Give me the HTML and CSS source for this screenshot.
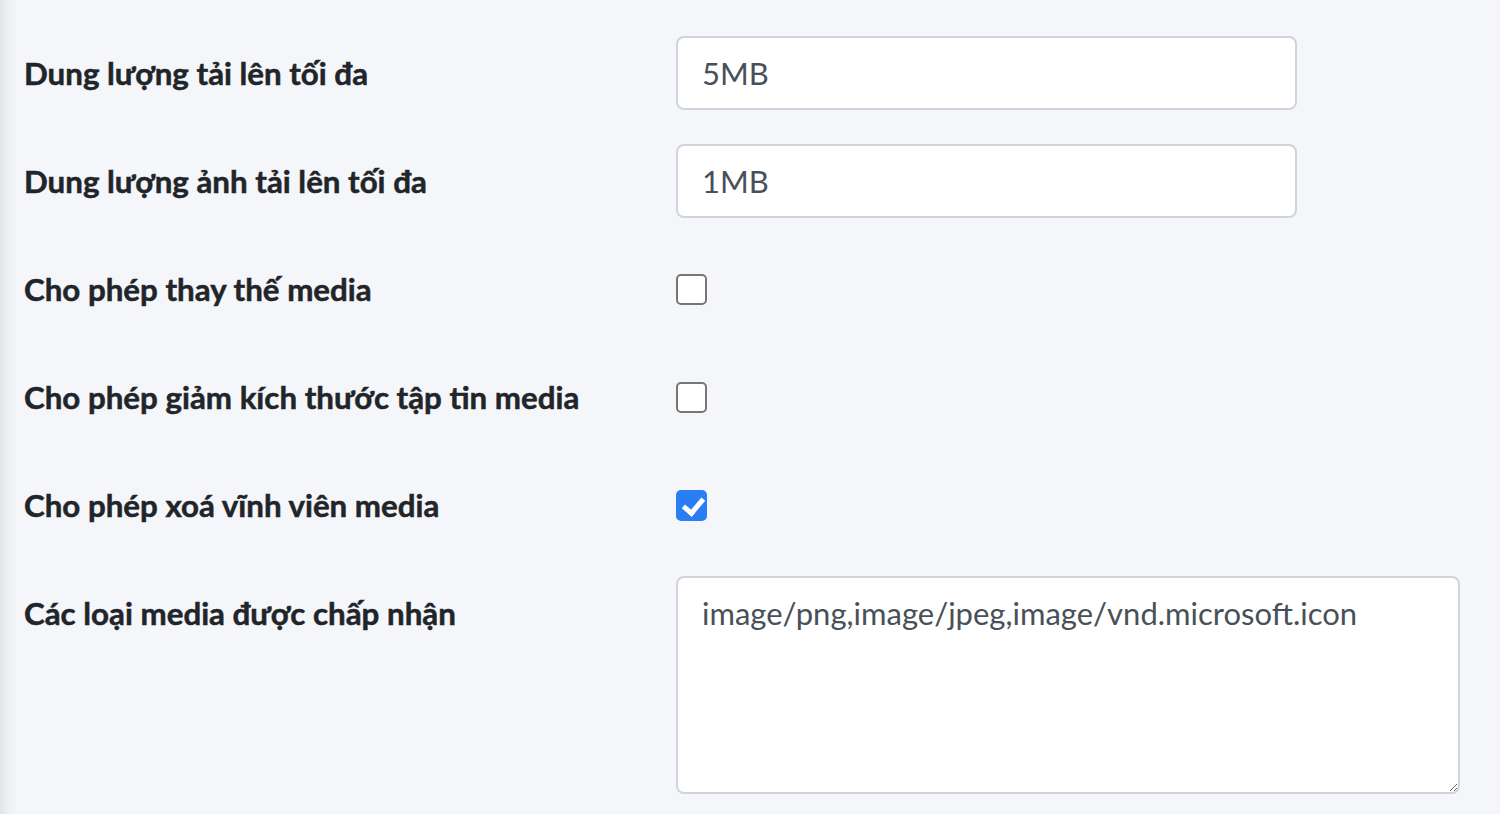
FILE: index.html
```html
<!DOCTYPE html>
<html lang="vi">
<head>
    <meta charset="UTF-8">
    <meta name="viewport" content="width=device-width, initial-scale=1.0">
    <title>Cài đặt media</title>
    <link rel="stylesheet" href="styles.css">
</head>
<body>
    <div class="content">
        <form class="settings">
            <div class="row">
                <label class="label" for="maxUpload">Dung lượng tải lên tối đa</label>
                <input class="field" id="maxUpload" type="text" value="5MB">
            </div>
            <div class="row">
                <label class="label" for="maxImage">Dung lượng ảnh tải lên tối đa</label>
                <input class="field" id="maxImage" type="text" value="1MB">
            </div>
            <div class="row">
                <label class="label" for="replace">Cho phép thay thế media</label>
                <div class="check-wrap"><input class="check" id="replace" type="checkbox"></div>
            </div>
            <div class="row">
                <label class="label" for="resize">Cho phép giảm kích thước tập tin media</label>
                <div class="check-wrap"><input class="check" id="resize" type="checkbox"></div>
            </div>
            <div class="row">
                <label class="label" for="forceDelete">Cho phép xoá vĩnh viên media</label>
                <div class="check-wrap"><input class="check" id="forceDelete" type="checkbox" checked></div>
            </div>
            <div class="row">
                <label class="label" for="mimes">Các loại media được chấp nhận</label>
                <textarea class="field area" id="mimes">image/png,image/jpeg,image/vnd.microsoft.icon</textarea>
            </div>
        </form>
    </div>
</body>
</html>
```

FILE: styles.css
```css
* {
    box-sizing: border-box;
}
body {
    margin: 0;
    background-color: #f4f6f9;
    font-family: "Lato", "Open Sans", sans-serif;
    color: #212529;
}
.content {
    min-height: 814px;
    padding: 36px 0 0 24px;
    background: linear-gradient(to right, #e2e4e7 0, #eef0f3 8px, #f4f6f9 18px);
}
.settings {
    display: flex;
    flex-direction: column;
    gap: 34px;
}
.row {
    display: grid;
    grid-template-columns: 652px 1fr;
    align-items: start;
}
.label {
    font-size: 31.3px;
    font-weight: 700;
    line-height: 74px;
    white-space: nowrap;
    -webkit-text-stroke: 0.5px #212529;
}
.field {
    width: 621px;
    height: 74px;
    padding: 0 24px;
    border: 2px solid #ced4da;
    border-radius: 8px;
    background: #fff;
    font-family: "Lato", "Open Sans", sans-serif;
    font-size: 31px;
    color: #495057;
    outline: none;
}
.area {
    width: 784px;
    height: 218px;
    padding: 15px 24px;
    line-height: 40px;
    resize: vertical;
}
.check-wrap {
    height: 74px;
    display: flex;
    align-items: center;
}
.check {
    appearance: none;
    -webkit-appearance: none;
    width: 31px;
    height: 31px;
    margin: 0;
    border: 2px solid #767676;
    border-radius: 5px;
    background: #fff;
    position: relative;
}
.check:checked {
    border-color: #2a7ef4;
    background: #2a7ef4;
}
.check:checked::after {
    content: "";
    position: absolute;
    left: 9px;
    top: 2px;
    width: 8px;
    height: 16px;
    border: solid #fff;
    border-width: 0 5px 5px 0;
    transform: rotate(40deg);
}
```
